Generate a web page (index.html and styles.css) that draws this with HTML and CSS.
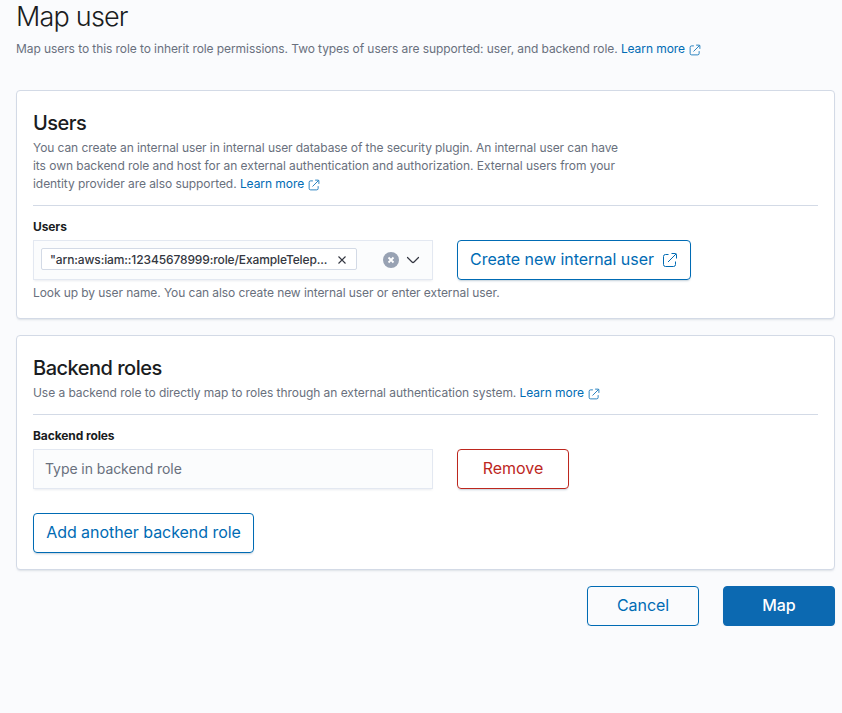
FILE: index.html
```html
<!DOCTYPE html>
<html lang="en">
<head>
<meta charset="utf-8">
<title>Map user</title>
<link rel="stylesheet" href="styles.css">
</head>
<body>
<svg width="0" height="0" class="defs">
  <symbol id="ext" viewBox="0 0 16 16"><path d="M6.500 2.500H3.500A2 2 0 0 0 1.500 4.500v8A2 2 0 0 0 3.500 14.500h8a2 2 0 0 0 2-2V9.500M6 10l8-8M9.500 1.500h4a1 1 0 0 1 1 1V6.500"/></symbol>
</svg>
<main class="page">
  <h1 class="title">Map user</h1>
  <p class="text intro">Map users to this role to inherit role permissions. Two types of users are supported: user, and backend role. <a class="link">Learn more<svg class="link-icon"><use href="#ext"/></svg></a></p>

  <section class="panel users">
    <h2 class="heading">Users</h2>
    <p class="text">You can create an internal user in internal user database of the security plugin. An internal user can have<br><span class="line">its own backend role and host for an external authentication and authorization. External users from your<br>identity provider are also supported. <a class="link">Learn more<svg class="link-icon"><use href="#ext"/></svg></a></span></p>
    <hr class="rule">
    <div class="label">Users</div>
    <div class="row">
      <div class="field combo">
        <span class="pill"><span class="pill-text">"arn:aws:iam::12345678999:role/ExampleTelep...</span><svg class="cross" viewBox="0 0 8 8"><path d="M.5.5l7 7M7.500.5l-7 7"/></svg></span>
        <svg class="clear" viewBox="0 0 16 16"><circle cx="8" cy="8" r="8"/><path d="M5.500 5.500l5 5M10.500 5.500l-5 5"/></svg>
        <svg class="chevron" viewBox="0 0 14 8"><path d="M1.500 1.500L6 6q1 1 2 0l4.500-4.500"/></svg>
      </div>
      <button class="btn create">Create new internal user<svg class="btn-icon"><use href="#ext"/></svg></button>
    </div>
    <p class="text help">Look up by user name. You can also create new internal user or enter external user.</p>
  </section>

  <section class="panel roles">
    <h2 class="heading">Backend roles</h2>
    <p class="text line">Use a backend role to directly map to roles through an external authentication system. <a class="link">Learn more<svg class="link-icon"><use href="#ext"/></svg></a></p>
    <hr class="rule">
    <div class="label">Backend roles</div>
    <div class="row">
      <div class="field"><span class="placeholder">Type in backend role</span></div>
      <button class="btn danger">Remove</button>
    </div>
    <button class="btn add">Add another backend role</button>
  </section>

  <footer class="actions">
    <button class="btn">Cancel</button>
    <button class="btn fill">Map</button>
  </footer>
</main>
</body>
</html>
```
FILE: styles.css
```css
* { box-sizing: border-box; }
body { margin: 0; background: #fafbfd; color: #1a1c21; font-family: Inter, "Liberation Sans", sans-serif; }
h1, h2, p { margin: 0; }
.defs { position: absolute; }
.page { padding: 0 7px 0 16px; }
.title { height: 40px; font-size: 27px; line-height: 34px; font-weight: 300; letter-spacing: -0.8px; }
.text { font-size: 12px; line-height: 18px; letter-spacing: -0.08px; color: #69707d; white-space: nowrap; }
.line { letter-spacing: -0.055px; }
.intro { margin-bottom: 32px; }
.link { color: #006bb4; }
.link-icon { width: 12px; height: 12px; margin-left: 4px; vertical-align: -2.5px; fill: none; stroke: currentColor; stroke-width: 1.1; }
.panel { border: 1px solid #d3dae6; border-radius: 4px; background: #fff; padding: 16px; box-shadow: 0 2px 2px -1px rgba(152, 162, 179, .3); }
.users { height: 229px; margin-bottom: 16px; }
.roles { height: 235px; }
.heading { font-size: 20px; line-height: 32px; font-weight: 500; letter-spacing: -0.5px; }
.rule { height: 1px; border: 0; margin: 12px 0; background: #d3dae6; }
.label { font-size: 12px; line-height: 18px; font-weight: 700; letter-spacing: -0.1px; margin-bottom: 4px; }
.row { display: flex; gap: 24px; }
.field { display: flex; align-items: center; width: 400px; height: 40px; padding: 0 11px 2px; border: 1px solid #e3e8f1; background: #fbfcfd; color: #69707d; font-size: 14px; box-shadow: 0 2px 2px -1px rgba(152, 162, 179, .2); }
.placeholder { letter-spacing: -0.07px; }
.combo { padding: 0 12px 0 7px; }
.pill { display: flex; align-items: center; justify-content: space-between; width: 316px; height: 22px; margin-top: -2px; padding: 0 10px 0 8px; border: 1px solid #d3dae6; border-radius: 2px; background: #fff; color: #343741; font-size: 12px; font-weight: 500; letter-spacing: -0.12px; }
.cross { width: 8px; height: 8px; margin-top: 1px; fill: none; stroke: #343741; stroke-width: 1.1; }
.clear { width: 16px; height: 16px; margin-left: 26px; fill: #98a2b3; stroke: #fff; stroke-width: 1.8; }
.clear circle { stroke: none; }
.chevron { width: 14px; height: 8px; margin-left: auto; fill: none; stroke: #343741; stroke-width: 1.2; stroke-linecap: round; }
.btn { display: flex; align-items: center; justify-content: center; width: 112px; height: 40px; padding: 0 0 2px; border: 1px solid #006bb4; border-radius: 4px; background: transparent; color: #006bb4; font: 400 16px Inter, sans-serif; letter-spacing: -0.05px; box-shadow: 0 2px 2px -1px rgba(54, 97, 126, .3); white-space: nowrap; }
.create { width: 234px; }
.btn-icon { width: 16px; height: 16px; margin-left: 8px; margin-top: 1px; fill: none; stroke: currentColor; stroke-width: 1; }
.help { margin-top: 4px; }
.danger { color: #bd271e; border-color: #bd271e; }
.add { width: 221px; margin-top: 24px; }
.actions { display: flex; justify-content: flex-end; gap: 24px; margin-top: 16px; }
.fill { background: #0c69b1; border-color: #0c69b1; color: #fff; font-weight: 500; }
```
